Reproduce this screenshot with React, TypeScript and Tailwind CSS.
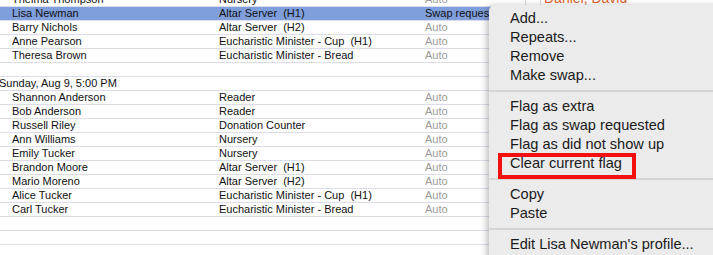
import React from 'react';

type Row = {
  name?: string;
  role?: string;
  status?: string;
  header?: string;
  selected?: boolean;
  extra?: string;
};

const rows: Row[] = [
  { name: 'Thelma Thompson', role: 'Nursery', status: 'Auto', extra: 'Daniel, David' },
  { name: 'Lisa Newman', role: 'Altar Server  (H1)', status: 'Swap requested', selected: true },
  { name: 'Barry Nichols', role: 'Altar Server  (H2)', status: 'Auto' },
  { name: 'Anne Pearson', role: 'Eucharistic Minister - Cup  (H1)', status: 'Auto' },
  { name: 'Theresa Brown', role: 'Eucharistic Minister - Bread', status: 'Auto' },
  {},
  { header: 'Sunday, Aug 9, 5:00 PM' },
  { name: 'Shannon Anderson', role: 'Reader', status: 'Auto' },
  { name: 'Bob Anderson', role: 'Reader', status: 'Auto' },
  { name: 'Russell Riley', role: 'Donation Counter', status: 'Auto' },
  { name: 'Ann Williams', role: 'Nursery', status: 'Auto' },
  { name: 'Emily Tucker', role: 'Nursery', status: 'Auto' },
  { name: 'Brandon Moore', role: 'Altar Server  (H1)', status: 'Auto' },
  { name: 'Mario Moreno', role: 'Altar Server  (H2)', status: 'Auto' },
  { name: 'Alice Tucker', role: 'Eucharistic Minister - Cup  (H1)', status: 'Auto' },
  { name: 'Carl Tucker', role: 'Eucharistic Minister - Bread', status: 'Auto' },
  {},
  {},
  {},
];

type MenuEntry = { label?: string; separator?: boolean; flagged?: boolean };

const menu: MenuEntry[] = [
  { label: 'Add...' },
  { label: 'Repeats...' },
  { label: 'Remove' },
  { label: 'Make swap...' },
  { separator: true },
  { label: 'Flag as extra' },
  { label: 'Flag as swap requested' },
  { label: 'Flag as did not show up' },
  { label: 'Clear current flag', flagged: true },
  { separator: true },
  { label: 'Copy' },
  { label: 'Paste' },
  { separator: true },
  { label: "Edit Lisa Newman's profile..." },
];

const ScheduleRow: React.FC<{ row: Row }> = ({ row }) => {
  const bg = row.selected ? 'bg-[#7f9fdc]' : 'bg-white';
  return (
    <div className={`flex h-[14px] shrink-0 border-b border-[#dcdcee] text-[11px] leading-[13px] ${bg}`}>
      {row.header ? (
        <div className="-ml-[1px] whitespace-pre text-[#111]">{row.header}</div>
      ) : (
        <>
          <div className="w-[219px] shrink-0 whitespace-pre pl-[12px] text-[#111]">{row.name}</div>
          <div className="w-[206px] shrink-0 whitespace-pre text-[#111]">{row.role}</div>
          <div
            className={`w-[101px] shrink-0 overflow-hidden whitespace-pre border-r border-[#d8d8d8] ${
              row.selected ? 'text-[#111]' : 'text-[#9b9b9b]'
            }`}
          >
            {row.status}
          </div>
          <div className="w-[15px] shrink-0 border-r border-[#d8d8d8]" />
          <div className="whitespace-pre pl-[3px] text-[14px] leading-[10px] text-[#e0622c]">{row.extra}</div>
        </>
      )}
    </div>
  );
};

const ContextMenu: React.FC = () => (
  <div className="absolute left-[489px] top-[5px] h-[270px] w-[240px] rounded-tl-[6px] bg-[#ebebeb] pt-[4px] shadow-[-2px_1px_7px_rgba(0,0,0,0.28)] font-['Liberation_Sans',Arial,sans-serif] text-[14.6px] text-[#1a1a1a]">
    {menu.map((m, i) =>
      m.separator ? (
        <div key={i} className="flex h-[12px] items-center">
          <div className="h-[2px] w-full bg-[#d6d6d6]" />
        </div>
      ) : (
        <div key={i} className="relative flex h-[19px] items-center whitespace-nowrap pl-[21px]">
          {m.label}
          {m.flagged && (
            <div className="absolute left-[9px] top-[-1px] h-[26px] w-[138px] border-[4px] border-[#f21010]" />
          )}
        </div>
      )
    )}
  </div>
);

export default function App() {
  return (
    <div className="relative h-[255px] w-[713px] overflow-hidden bg-white font-['Liberation_Sans',Arial,sans-serif]">
      <div className="-mt-[7px] flex flex-col">
        {rows.map((r, i) => (
          <ScheduleRow key={i} row={r} />
        ))}
      </div>
      <ContextMenu />
    </div>
  );
}
